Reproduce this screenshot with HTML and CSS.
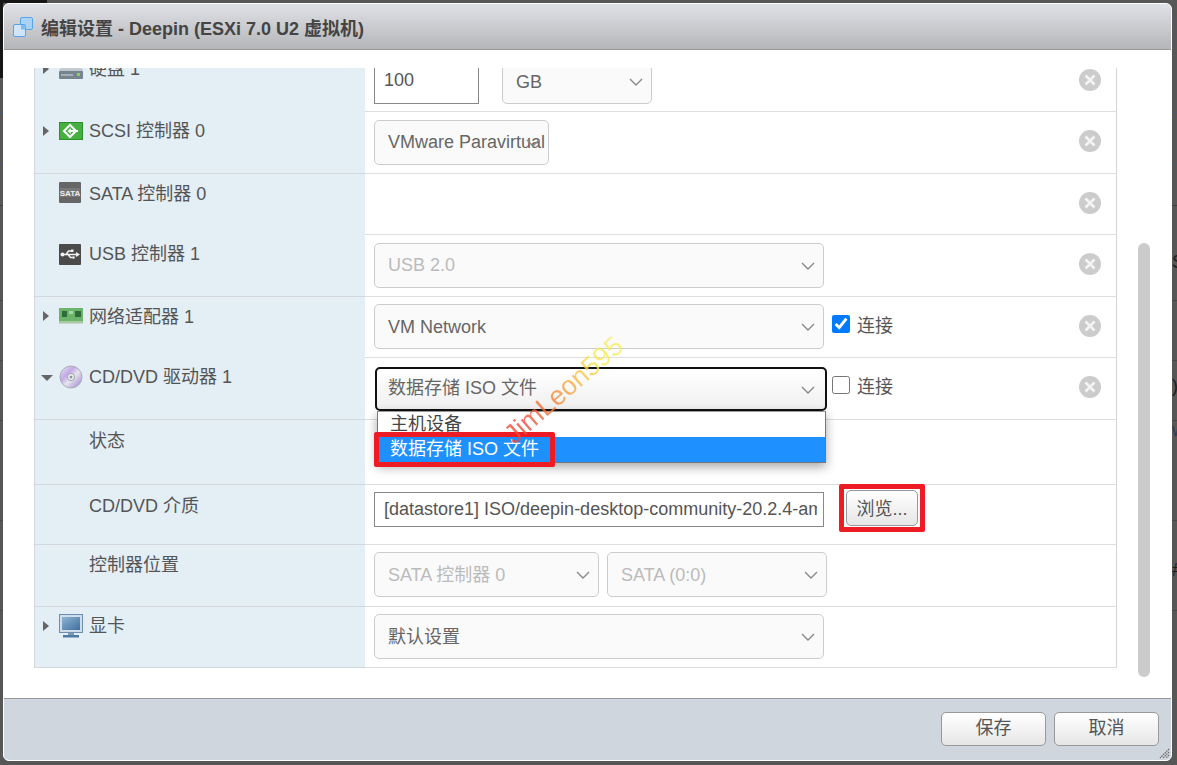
FILE: index.html
```html
<!DOCTYPE html>
<html lang="zh-CN">
<head>
<meta charset="utf-8">
<title>编辑设置 - Deepin (ESXi 7.0 U2 虚拟机)</title>
<link rel="stylesheet" href="styles.css">
</head>
<body>
<div class="backdrop" aria-hidden="true">
  <span class="bd-corner-top"></span>
  <span class="bd-corner-left"></span>
  <span class="bd-glyph g1">S</span>
  <span class="bd-glyph g2">)</span>
  <span class="bd-glyph g3">w</span>
  <span class="bd-glyph g4">#</span>
</div>

<div class="dialog">
  <header class="titlebar">
    <svg class="title-icon" width="20" height="20" viewBox="0 0 20 20">
      <rect x="7.500" y=".5" width="12" height="12" rx="1.500" fill="#a9d2f5" stroke="#5aa3e6"/>
      <rect x=".5" y="7.500" width="12" height="12" rx="1.500" fill="#cfe6fa" stroke="#5aa3e6"/>
      <rect x="8" y="8" width="4.500" height="4.500" fill="#7fbcf0"/>
    </svg>
    <h1 class="title">编辑设置 - Deepin (ESXi 7.0 U2 虚拟机)</h1>
  </header>

  <main class="body">
    <div class="viewport">
      <div class="grid">

        <div class="lbl">
          <span class="arrow right"></span>
          <svg class="dev" width="24" height="24" viewBox="0 0 24 24">
            <defs><linearGradient id="hd" x1="0" y1="0" x2="0" y2="1"><stop offset="0" stop-color="#f0f3f5"/><stop offset="1" stop-color="#b9c2ca"/></linearGradient></defs>
            <path d="M4 4h16l4 10H0z" fill="url(#hd)"/>
            <rect x="0" y="14" width="24" height="8" rx="1" fill="#76848f"/>
            <rect x="2" y="17" width="12" height="2" fill="#a3aeb7"/>
            <rect x="18" y="16" width="3" height="3" fill="#7fd65a"/>
          </svg>
          <span class="name">硬盘 1</span>
        </div>
        <div class="val">
          <div class="input size">100</div>
          <div class="select gb">GB<svg class="chev" width="14" height="8" viewBox="0 0 14 8"><path d="M1 1l6 6 6-6"/></svg></div>
          <span class="remove first"><svg width="22" height="22" viewBox="0 0 22 22"><circle cx="11" cy="11" r="11"/><path d="M6.500 6.500l9 9m0-9l-9 9"/></svg></span>
        </div>

        <div class="lbl ruled">
          <span class="arrow right"></span>
          <svg class="dev" width="24" height="24" viewBox="0 0 24 24">
            <rect x=".5" y="3.500" width="23" height="17" fill="#45b03f" stroke="#2f8f2f"/>
            <path d="M11 6l6 6-6 6-6-6z" fill="none" stroke="#fff" stroke-width="2"/>
            <path d="M8.500 12l3.200-3v2h7.300v2h-7.300v2z" fill="#fff"/>
          </svg>
          <span class="name">SCSI 控制器 0</span>
        </div>
        <div class="val">
          <div class="select para">VMware Paravirtual<svg class="chev" width="14" height="8" viewBox="0 0 14 8"><path d="M1 1l6 6 6-6"/></svg></div>
          <span class="remove"><svg width="22" height="22" viewBox="0 0 22 22"><circle cx="11" cy="11" r="11"/><path d="M6.500 6.500l9 9m0-9l-9 9"/></svg></span>
        </div>

        <div class="lbl">
          <span class="arrow"></span>
          <svg class="dev" width="24" height="24" viewBox="0 0 24 24">
            <rect x="0" y="1" width="22" height="21" rx="1" fill="#666"/>
            <rect x="1" y="7" width="20" height="9" fill="#777"/>
            <text class="sata-text" x="11" y="14.500" text-anchor="middle">SATA</text>
          </svg>
          <span class="name nudge">SATA 控制器 0</span>
        </div>
        <div class="val">
          <span class="remove"><svg width="22" height="22" viewBox="0 0 22 22"><circle cx="11" cy="11" r="11"/><path d="M6.500 6.500l9 9m0-9l-9 9"/></svg></span>
        </div>

        <div class="lbl ruled">
          <span class="arrow"></span>
          <svg class="dev" width="24" height="24" viewBox="0 0 24 24">
            <rect x="0" y="2" width="22" height="21" rx="1" fill="#4a4a4a"/>
            <path d="M3 12.500h15M7 12.500l2.500-3.500h2.500M9 12.500l2.500 3h2" fill="none" stroke="#f2f2f2" stroke-width="1.500"/>
            <path d="M17 10l4 2.500-4 2.500z" fill="#f2f2f2"/>
            <circle cx="3.500" cy="12.500" r="2" fill="#f2f2f2"/>
            <rect x="12" y="7.500" width="2.500" height="2.500" fill="#f2f2f2"/>
            <circle cx="14.500" cy="15.500" r="1.300" fill="#f2f2f2"/>
          </svg>
          <span class="name">USB 控制器 1</span>
        </div>
        <div class="val">
          <div class="select wide off">USB 2.0<svg class="chev" width="14" height="8" viewBox="0 0 14 8"><path d="M1 1l6 6 6-6"/></svg></div>
          <span class="remove"><svg width="22" height="22" viewBox="0 0 22 22"><circle cx="11" cy="11" r="11"/><path d="M6.500 6.500l9 9m0-9l-9 9"/></svg></span>
        </div>

        <div class="lbl">
          <span class="arrow right"></span>
          <svg class="dev" width="24" height="24" viewBox="0 0 24 24">
            <rect x="0" y="4" width="24" height="13" fill="#6ab56a"/>
            <rect x="0" y="17" width="24" height="2.500" fill="#a8c8a0"/>
            <rect x="3" y="7" width="5" height="6" fill="#2f6a3a"/>
            <rect x="10" y="7" width="4" height="3" fill="#a8d6a4"/>
            <rect x="16" y="7" width="6" height="6" fill="#2f6a3a"/>
          </svg>
          <span class="name nudge">网络适配器 1</span>
        </div>
        <div class="val">
          <div class="select wide up">VM Network<svg class="chev" width="14" height="8" viewBox="0 0 14 8"><path d="M1 1l6 6 6-6"/></svg></div>
          <label class="check"><input type="checkbox" checked>连接</label>
          <span class="remove"><svg width="22" height="22" viewBox="0 0 22 22"><circle cx="11" cy="11" r="11"/><path d="M6.500 6.500l9 9m0-9l-9 9"/></svg></span>
        </div>

        <div class="lbl ruled">
          <span class="arrow down"></span>
          <svg class="dev" width="24" height="24" viewBox="0 0 24 24">
            <defs><linearGradient id="cd" x1="0" y1="0" x2="1" y2="1"><stop offset="0" stop-color="#eceef2"/><stop offset=".35" stop-color="#c3a8e6"/><stop offset=".55" stop-color="#e4e6ec"/><stop offset=".85" stop-color="#b49ede"/><stop offset="1" stop-color="#d8dbe2"/></linearGradient></defs>
            <circle cx="12" cy="12" r="11" fill="url(#cd)" stroke="#a8adb5"/>
            <circle cx="12" cy="12" r="3.500" fill="#f4f5f7" stroke="#9aa0a8"/>
            <circle cx="12" cy="12" r="1.500" fill="#8d939b"/>
          </svg>
          <span class="name">CD/DVD 驱动器 1</span>
        </div>
        <div class="val">
          <div class="select focus">数据存储 ISO 文件<svg class="chev" width="14" height="8" viewBox="0 0 14 8"><path d="M1 1l6 6 6-6"/></svg>
            <div class="menu">
              <div class="opt">主机设备</div>
              <div class="opt sel">数据存储 ISO 文件<span class="mark mark-opt"></span></div>
            </div>
          </div>
          <label class="check"><input type="checkbox">连接</label>
          <span class="remove"><svg width="22" height="22" viewBox="0 0 22 22"><circle cx="11" cy="11" r="11"/><path d="M6.500 6.500l9 9m0-9l-9 9"/></svg></span>
        </div>

        <div class="lbl ruled"><span class="arrow"></span><span class="dev-gap"></span><span class="name nudge2">状态</span></div>
        <div class="val"></div>

        <div class="lbl ruled"><span class="arrow"></span><span class="dev-gap"></span><span class="name nudge2">CD/DVD 介质</span></div>
        <div class="val val-top">
          <div class="input media"><span class="clip">[datastore1] ISO/deepin-desktop-community-20.2.4-amd64.iso</span></div>
          <button class="btn browse" type="button">浏览...<span class="mark mark-btn"></span></button>
        </div>

        <div class="lbl ruled"><span class="arrow"></span><span class="dev-gap"></span><span class="name nudge">控制器位置</span></div>
        <div class="val">
          <div class="select ctrl off up">SATA 控制器 0<svg class="chev" width="14" height="8" viewBox="0 0 14 8"><path d="M1 1l6 6 6-6"/></svg></div>
          <div class="select port off up">SATA (0:0)<svg class="chev" width="14" height="8" viewBox="0 0 14 8"><path d="M1 1l6 6 6-6"/></svg></div>
        </div>

        <div class="lbl ruled">
          <span class="arrow right"></span>
          <svg class="dev" width="24" height="24" viewBox="0 0 24 24">
            <defs><linearGradient id="scr" x1="0" y1="0" x2="1" y2="1"><stop offset="0" stop-color="#8fb3d4"/><stop offset="1" stop-color="#3f6f9e"/></linearGradient></defs>
            <rect x=".5" y=".5" width="23" height="18" fill="#cfdcea" stroke="#6c8fb0"/>
            <rect x="3" y="3" width="18" height="13" fill="url(#scr)"/>
            <rect x="9" y="19" width="6" height="2" fill="#7f9ab5"/>
            <rect x="4" y="21" width="16" height="2.500" fill="#4d7aa3"/>
          </svg>
          <span class="name">显卡</span>
        </div>
        <div class="val">
          <div class="select wide up">默认设置<svg class="chev" width="14" height="8" viewBox="0 0 14 8"><path d="M1 1l6 6 6-6"/></svg></div>
        </div>

      </div>
      <div class="thumb"></div>
    </div>
  </main>

  <footer class="footer">
    <button class="btn act" type="button">保存</button>
    <button class="btn act" type="button">取消</button>
    <svg class="grip" width="11" height="11" viewBox="0 0 11 11"><path d="M10 1L1 10M10 4L4 10M10 7L7 10" stroke="#666" stroke-width="1.200" stroke-dasharray="1.500 .8"/></svg>
  </footer>

  <div class="watermark">JimLeon595</div>
</div>
</body>
</html>
```

FILE: styles.css
```css
* { box-sizing: border-box; }

html, body {
  margin: 0;
  height: 100%;
  overflow: hidden;
}

body {
  position: relative;
  padding: 3px 5px 4px 3px;
  background-color: #575757;
  font-family: "Liberation Sans", "Noto Sans CJK SC", sans-serif;
  font-size: 18px;
  color: #555;
}

/* darkened page behind the dialog */
.backdrop {
  position: absolute;
  inset: 0;
  background:
    linear-gradient(to bottom, transparent 112px, #47596a 112px, #47596a 113px, transparent 113px, transparent 163px, #47596a 163px, #47596a 164px, transparent 164px, transparent 205px, #3e3e3e 205px, #3e3e3e 206px, transparent 206px, transparent 300px, #474747 300px, #474747 301px, transparent 301px, transparent 360px, #474747 360px, #474747 361px, transparent 361px, transparent 420px, #474747 420px, #474747 421px, transparent 421px, transparent 520px, #474747 520px, #474747 521px, transparent 521px, transparent 610px, #474747 610px, #474747 611px, transparent 611px);
}
.bd-corner-top { position: absolute; left: 0; top: 0; width: 47px; height: 3px; background: #161616; }
.bd-corner-left { position: absolute; left: 0; top: 0; width: 3px; height: 78px; background: #161616; }
.bd-glyph { position: absolute; left: 1172px; font-size: 18px; line-height: 20px; color: #1b1b1b; }
.g1 { top: 252px; }
.g2 { top: 376px; }
.g3 { top: 420px; color: #2a3f55; }
.g4 { top: 560px; }

.dialog {
  position: relative;
  display: flex;
  flex-direction: column;
  height: 100%;
  background: #fff;
  border: 1px solid #fff;
  border-radius: 6px;
  overflow: hidden;
}

.titlebar {
  display: flex;
  align-items: center;
  flex: none;
  height: 46px;
  padding: 0 0 0 9px;
  background: linear-gradient(#e0e1e6, #b5b6b9);
  border-bottom: 1px solid #9a9a9a;
}
.title-icon { flex: none; margin-right: 8px; }
.title {
  margin: 0;
  font-size: 18px;
  font-weight: 700;
  color: #444;
}

.body {
  flex: 1;
  min-height: 0;
  padding: 18px 0 0 30px;
}

.viewport {
  position: relative;
  width: 1083px;
  height: 600px;
}

.grid {
  display: grid;
  grid-template-columns: 331px 752px;
  grid-template-rows: 62px 62px 61px 62px 61px 62px 65px 60px 62px 61px;
  margin-top: -18px;
  clip-path: inset(18px 0 0 0);
  border-right: 1px solid #d5d5d5;
}

.lbl {
  display: flex;
  align-items: flex-start;
  padding: 7px 0 0 6px;
  background: #e3eef5;
  border-left: 1px solid #d3d8dd;
}
.lbl.ruled { border-bottom: 1px solid #d3d8dd; }

.arrow { flex: none; width: 18px; height: 24px; position: relative; }
.arrow.right::before {
  content: "";
  position: absolute;
  left: 2px;
  top: 7px;
  border-left: 6px solid #666;
  border-top: 5px solid transparent;
  border-bottom: 5px solid transparent;
}
.arrow.down::before {
  content: "";
  position: absolute;
  left: 0;
  top: 10px;
  border-top: 6px solid #666;
  border-left: 6px solid transparent;
  border-right: 6px solid transparent;
}
.dev { flex: none; display: block; }
.dev-gap { flex: none; width: 24px; }
.sata-text { font-size: 8px; font-weight: 700; fill: #eee; font-family: "Liberation Sans", sans-serif; }
.name { margin-left: 6px; line-height: 24px; white-space: nowrap; }
.nudge { margin-top: 1px; }
.nudge2 { margin-top: 2px; }

.val {
  display: flex;
  align-items: center;
  gap: 8px;
  margin-right: 1px;
  padding: 0 15px 0 9px;
  border-bottom: 1px solid #ddd;
}
.val-top { align-items: flex-start; padding-top: 7px; }

.select, .input {
  position: relative;
  flex: none;
  height: 45px;
  line-height: 43px;
  padding-left: 13px;
  white-space: nowrap;
}
.select {
  background: #fafafa;
  border: 1px solid #ccc;
  border-radius: 5px;
  color: #666;
}
.select.off { color: #bbb; }
.up { margin-bottom: 2px; line-height: 45px; }
.chev {
  position: absolute;
  right: 8px;
  top: 18px;
  fill: none;
  stroke: #888;
  stroke-width: 1.400;
}
.wide { width: 450px; }
.gb { width: 150px; margin: 1px 0 0 15px; line-height: 45px; }
.para { width: 175px; overflow: hidden; }
.ctrl { width: 225px; }
.port { width: 220px; }

.focus {
  width: 452px;
  height: 44px;
  margin-left: 1px;
  margin-right: -3px;
  padding-left: 11px;
  line-height: 38px;
  border: 2px solid #111;
  background: linear-gradient(#fff, #f0f0f0);
}
.focus .chev { right: 10px; top: 17px; }

.input {
  background: #fff;
  border: 1px solid #888;
  padding-left: 9px;
  color: #555;
}
.size { width: 105px; margin-top: 1px; line-height: 41px; }
.media {
  width: 450px;
  height: 35px;
  line-height: 33px;
  padding-right: 6px;
}
.clip { display: block; overflow: hidden; }

.menu {
  position: absolute;
  z-index: 3;
  left: 0;
  top: 42px;
  width: 449px;
  background: #fff;
  border: 1px solid #777;
  border-top-color: #999;
  box-shadow: 0 4px 10px rgba(0, 0, 0, .35);
  line-height: 25px;
  color: #444;
}
.opt { position: relative; height: 25px; padding-left: 12px; }
.opt.sel { background: #1e90ff; color: #fff; }

.mark {
  position: absolute;
  border: 5px solid #ed1c24;
  border-radius: 2px;
  pointer-events: none;
}
.mark-opt { left: -4px; top: -5px; width: 181px; height: 35px; }
.mark-btn { left: -8px; top: -7px; width: 86px; height: 48px; }

.check {
  display: flex;
  align-items: center;
  flex: none;
  gap: 7px;
  margin-bottom: 7px;
  color: #555;
}
.check input {
  width: 18px;
  height: 18px;
  margin: 0;
  accent-color: #007bff;
}

.remove { margin: 0 0 3px auto; line-height: 0; }
.remove.first { margin-bottom: 1px; }
.remove circle { fill: #ccc; }
.remove path { fill: none; stroke: #f4f4f4; stroke-width: 2.600; }

.btn {
  position: relative;
  font: inherit;
  color: #555;
  background: linear-gradient(#fff, #e6e6e6);
  border: 1px solid #999;
  border-radius: 5px;
  padding: 0 0 2px;
}
.browse { width: 72px; height: 36px; margin: -2px 0 0 14px; }

.thumb {
  position: absolute;
  left: 1104px;
  top: 193px;
  width: 12px;
  height: 434px;
  background: #ccc;
  border-radius: 6px;
}

.footer {
  position: relative;
  display: flex;
  justify-content: flex-end;
  align-items: flex-start;
  gap: 8px;
  flex: none;
  height: 62px;
  padding: 13px 12px 0 0;
  background: #d0d6de;
  border-top: 1px solid #999;
}
.act { width: 105px; height: 34px; padding-bottom: 6px; }
.grip { position: absolute; right: 1px; bottom: 1px; }

.watermark {
  position: absolute;
  left: 486px;
  top: 371px;
  z-index: 5;
  transform: rotate(-41deg);
  font-size: 27px;
  line-height: 30px;
  white-space: nowrap;
  background: linear-gradient(to right, #f04a3a 15%, #f59a3a 50%, #f7e84a 80%, #f5f06a);
  -webkit-background-clip: text;
  background-clip: text;
  color: transparent;
  opacity: .8;
}
```
